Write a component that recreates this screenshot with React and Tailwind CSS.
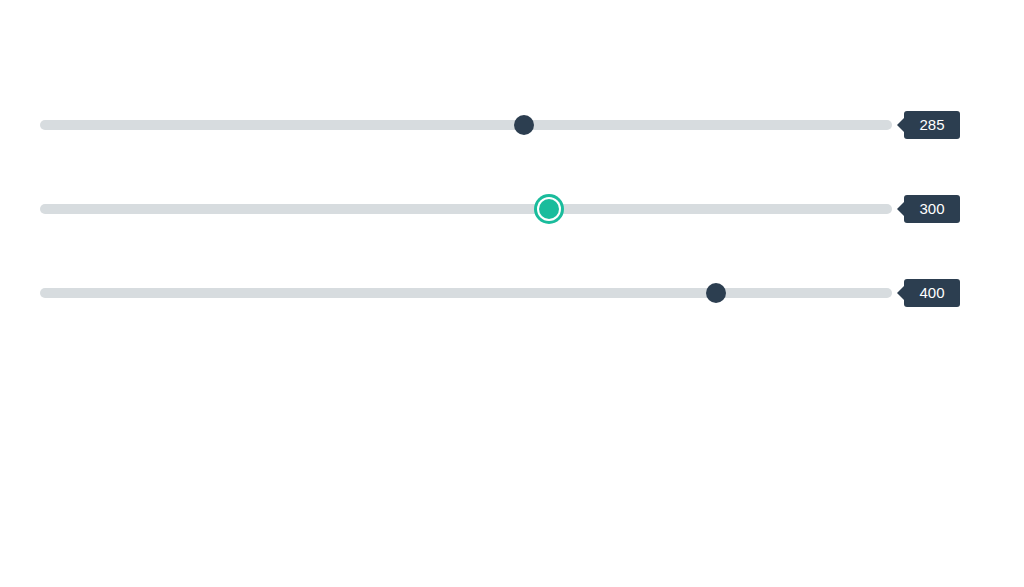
import React from "react";

const MIN = 0;
const MAX = 500;
const THUMB = 20;

const SLIDERS = [
  { value: 285, active: false },
  { value: 300, active: true },
  { value: 400, active: false },
];

function RangeSlider({ value, active }) {
  const pct = (value - MIN) / (MAX - MIN);
  return (
    <div className="flex h-[30px] items-center">
      <div className="relative h-[10px] w-[852px] rounded-[5px] bg-[#d7dcdf]">
        <div
          className={
            active
              ? "absolute top-[-5px] h-5 w-5 rounded-full bg-[#1abc9c] shadow-[0_0_0_2px_#fff,0_0_0_5px_#1abc9c]"
              : "absolute top-[-5px] h-5 w-5 rounded-full bg-[#2c3e50]"
          }
          style={{ left: `calc(${pct} * (100% - ${THUMB}px))` }}
        />
      </div>
      <div className="relative ml-3 h-[28px] w-[56px] rounded-[3px] bg-[#2c3e50] text-center text-[15px] leading-[28px] text-white">
        <span className="absolute left-[-7px] top-[7px] h-0 w-0 border-y-[7px] border-r-[7px] border-y-transparent border-r-[#2c3e50]" />
        {value}
      </div>
    </div>
  );
}

export default function App() {
  return (
    <div className="min-h-[587px] bg-white px-10 pt-[110px] font-['Liberation_Sans',Arial,sans-serif]">
      <div className="flex flex-col gap-[54px]">
        {SLIDERS.map((s) => (
          <RangeSlider key={s.value} {...s} />
        ))}
      </div>
    </div>
  );
}
